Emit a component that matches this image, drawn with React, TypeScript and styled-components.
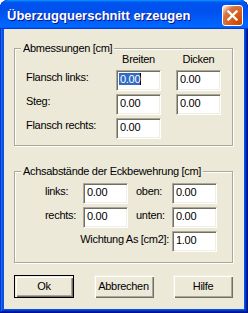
import React from "react";
import styled, { createGlobalStyle } from "styled-components";

const GlobalStyle = createGlobalStyle`
  html, body {
    margin: 0;
    padding: 0;
    background: #ffffff;
  }
  body {
    font-family: "Liberation Sans", Arial, sans-serif;
    font-size: 11px;
    letter-spacing: -0.3px;
    color: #000;
  }
`;

const Window = styled.div`
  width: 248px;
  height: 313px;
  display: flex;
  flex-direction: column;
  border-radius: 8px 8px 0 0;
  overflow: hidden;
  background: #0454e4;
  box-shadow: inset -1px -1px #00138c, inset 1px 1px #0831d9,
    inset -2px -2px #001ea0, inset 2px 2px #166aee, inset -3px -3px #003bda,
    inset 3px 3px #0855dd;
`;

const TitleBar = styled.div`
  flex: none;
  height: 29px;
  display: flex;
  align-items: center;
  justify-content: space-between;
  padding: 0 5px 0 7px;
  border-radius: 8px 8px 0 0;
  background: linear-gradient(
    180deg,
    #0997ff,
    #0053ee 8%,
    #0050ee 40%,
    #0066ff 88%,
    #0066ff 93%,
    #005bff 95%,
    #003dd7 96%,
    #003dd7
  );
`;

const Title = styled.span`
  padding-top: 2px;
  font-size: 13px;
  font-weight: bold;
  letter-spacing: 0;
  line-height: 15px;
  color: #fff;
  text-shadow: 1px 1px #0f1089;
`;

const CloseButton = styled.div`
  box-sizing: border-box;
  width: 21px;
  height: 21px;
  margin-top: 1px;
  display: flex;
  align-items: center;
  justify-content: center;
  border: 1px solid #fff;
  border-radius: 3px;
  background: radial-gradient(
    circle at 90% 90%,
    #cc4600 0%,
    #dc6527 55%,
    #cd7546 70%,
    #ffccb2 90%,
    #fff 100%
  );
`;

const Client = styled.div`
  flex: 1;
  margin: 0 4px 4px;
  padding: 19px 10px 10px;
  display: flex;
  flex-direction: column;
  background: #ece9d8;
`;

const GroupBox = styled.section<{ $gap?: number; $bottom: number }>`
  display: flex;
  flex-direction: column;
  margin: ${(p) => p.$gap ?? 0}px 1px 0 0;
  padding-bottom: ${(p) => p.$bottom}px;
  border: 1px solid #aca899;
  box-shadow: inset 1px 1px #fff, 1px 1px #fff;
`;

const Legend = styled.div`
  align-self: flex-start;
  margin: -6px 0 0 6px;
  padding: 0 2px;
  line-height: 11px;
  background: #ece9d8;
`;

const SizeGrid = styled.div`
  display: grid;
  grid-template-columns: 75px 45px 45px;
  column-gap: 15px;
  row-gap: 3px;
  padding-left: 11px;
`;

const ColHead = styled.div`
  margin-bottom: 2px;
  line-height: 11px;
  text-align: center;
`;

const OffsetGrid = styled.div`
  display: grid;
  grid-template-columns: 38px 45px 44px 45px;
  row-gap: 3px;
  margin-top: 6px;
  padding-left: 30px;
`;

const Label = styled.div<{ $top: number; $indent?: number }>`
  padding-top: ${(p) => p.$top}px;
  padding-left: ${(p) => p.$indent ?? 0}px;
  line-height: 13px;
  white-space: nowrap;
`;

const WeightLabel = styled(Label)`
  grid-column: 1 / 4;
  padding-right: 3px;
  text-align: right;
`;

const TextBox = styled.div`
  box-sizing: border-box;
  height: 21px;
  padding: 2px 2px 0 3px;
  line-height: 13px;
  white-space: nowrap;
  background: #fff;
  border: 1px solid;
  border-color: #aca899 #fff #fff #aca899;
  box-shadow: inset 1px 1px #716f64, inset -1px -1px #f1efe2;
`;

const Selected = styled.span`
  margin-left: -1px;
  padding-left: 1px;
  color: #fff;
  background: #316ac5;
  border-right: 1px solid #000;
`;

const ButtonRow = styled.div`
  display: flex;
  justify-content: space-between;
  margin: 12px 1px 0 0;
`;

const Button = styled.button<{ $default?: boolean }>`
  box-sizing: border-box;
  width: 60px;
  height: 23px;
  padding: 0 0 2px;
  font: inherit;
  letter-spacing: inherit;
  color: #000;
  background: #ece9d8;
  border: ${(p) => (p.$default ? "1px solid #000" : "none")};
  border-radius: 0;
  box-shadow: inset 1px 1px #f1efe2, inset 2px 2px #fff,
    inset -1px -1px #716f64, inset -2px -2px #aca899;
`;

const sizeRows = [
  { label: "Flansch links:", width: "0.00", thick: "0.00" },
  { label: "Steg:", width: "0.00", thick: "0.00" },
  { label: "Flansch rechts:", width: "0.00", thick: null },
];

export default function App() {
  return (
    <>
      <GlobalStyle />
      <Window>
        <TitleBar>
          <Title>Überzugquerschnitt erzeugen</Title>
          <CloseButton>
            <svg width="11" height="11" viewBox="0 0 11 11">
              <path
                d="M1.5 1.5 L9.5 9.5 M9.5 1.5 L1.5 9.5"
                stroke="#fff"
                strokeWidth="2.3"
                strokeLinecap="square"
              />
            </svg>
          </CloseButton>
        </TitleBar>
        <Client>
          <GroupBox $bottom={6}>
            <Legend>Abmessungen [cm]</Legend>
            <SizeGrid>
              <div />
              <ColHead>Breiten</ColHead>
              <ColHead>Dicken</ColHead>
              {sizeRows.map((row, i) => (
                <React.Fragment key={row.label}>
                  <Label $top={1}>{row.label}</Label>
                  <TextBox>
                    {i === 0 ? <Selected>{row.width}</Selected> : row.width}
                  </TextBox>
                  {row.thick !== null ? <TextBox>{row.thick}</TextBox> : <div />}
                </React.Fragment>
              ))}
            </SizeGrid>
          </GroupBox>

          <GroupBox $gap={25} $bottom={10}>
            <Legend>Achsabstände der Eckbewehrung [cm]</Legend>
            <OffsetGrid>
              <Label $top={2}>links:</Label>
              <TextBox>0.00</TextBox>
              <Label $top={2} $indent={8}>
                oben:
              </Label>
              <TextBox>0.00</TextBox>
              <Label $top={2}>rechts:</Label>
              <TextBox>0.00</TextBox>
              <Label $top={2} $indent={8}>
                unten:
              </Label>
              <TextBox>0.00</TextBox>
              <WeightLabel $top={2}>Wichtung As [cm2]:</WeightLabel>
              <TextBox>1.00</TextBox>
            </OffsetGrid>
          </GroupBox>

          <ButtonRow>
            <Button $default>Ok</Button>
            <Button>Abbrechen</Button>
            <Button>Hilfe</Button>
          </ButtonRow>
        </Client>
      </Window>
    </>
  );
}
